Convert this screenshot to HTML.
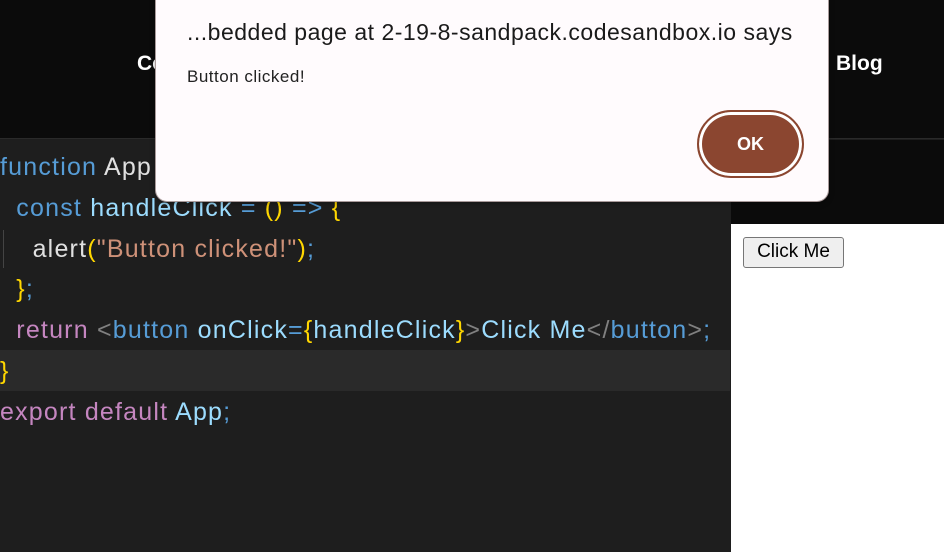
<!DOCTYPE html>
<html><head><style>
*{margin:0;padding:0;box-sizing:border-box}
body{width:944px;height:552px;overflow:hidden;background:#1e1e1e;font-family:"Liberation Sans",sans-serif;position:relative}
.hdr{position:absolute;left:0;top:0;width:944px;height:139px;background:#0b0b0b;border-bottom:1px solid #2a2a2a}
.nav{position:absolute;color:#fff;font-weight:bold;font-size:21px;top:52px}
.ed{position:absolute;left:0;top:140px;width:730px;height:412px;background:#1e1e1e}
.hl{position:absolute;left:0;top:350px;width:730px;height:41px;background:#2a2a2a}
.line{position:absolute;left:0;font-size:25px;letter-spacing:1.2px;white-space:pre;line-height:30px;color:#e0e0e0}
.rp{position:absolute;left:731px;top:140px;width:213px;height:84px;background:#0b0b0b}
.rw{position:absolute;left:731px;top:224px;width:213px;height:328px;background:#fff}
.btn{position:absolute;left:743px;top:237px;width:101px;height:31px;border:1px solid #767676;border-radius:3px;background:#efefef;font-size:19px;text-align:center;line-height:28px;color:#000}
.dlg{position:absolute;left:155px;top:-12px;width:674px;height:214px;background:#fffbfd;border:1px solid #a89a9a;border-radius:12px;box-shadow:0 2px 6px rgba(0,0,0,.3)}
.t{position:absolute;left:31px;top:30px;font-size:23px;letter-spacing:0.5px;color:#1a1a1a}
.b{position:absolute;left:31px;top:78px;font-size:17px;letter-spacing:0.5px;color:#222}
.ok{position:absolute;left:541px;top:121px;width:107px;height:68px;border-radius:34px;background:#8b4630;border:2px solid #8b4630;box-shadow:inset 0 0 0 3px #fff;color:#fff;font-weight:bold;font-size:18px;text-align:center;line-height:64px}
.k{color:#569cd6}.f{color:#9cdcfe}.y{color:#ffd700}.s{color:#ce9178}.p{color:#c586c0}.g{color:#808080}.w{color:#e0e0e0}
</style></head><body>
<div class="hdr"></div>
<div class="nav" style="left:137px">Co</div>
<div class="nav" style="left:836px">Blog</div>
<div class="ed"></div>
<div class="hl"></div>
<div style="position:absolute;left:3px;top:230px;width:1px;height:38px;background:#444"></div>
<div class="line" style="top:152px"><span class="k">function</span> App</div>
<div class="line" style="top:193px">  <span class="k">const</span> <span class="f">handleClick</span> <span class="k">=</span> <span class="y">()</span> <span class="k">=&gt;</span> <span class="y">{</span></div>
<div class="line" style="top:234px">    alert<span class="y">(</span><span class="s">"Button clicked!"</span><span class="y">)</span><span class="k">;</span></div>
<div class="line" style="top:274px">  <span class="y">}</span><span class="k">;</span></div>
<div class="line" style="top:315px">  <span class="p">return</span> <span class="g">&lt;</span><span class="k">button</span> <span class="f">onClick</span><span class="k">=</span><span class="y">{</span><span class="f">handleClick</span><span class="y">}</span><span class="g">&gt;</span><span class="f">Click Me</span><span class="g">&lt;/</span><span class="k">button</span><span class="g">&gt;</span><span class="k">;</span></div>
<div class="line" style="top:356px"><span class="y">}</span></div>
<div class="line" style="top:397px"><span class="p">export default</span> <span class="f">App</span><span class="k">;</span></div>
<div class="rp"></div>
<div class="rw"></div>
<div class="btn">Click Me</div>
<div class="dlg">
<div class="t">...bedded page at 2-19-8-sandpack.codesandbox.io says</div>
<div class="b">Button clicked!</div>
<div class="ok">OK</div>
</div>
</body></html>
